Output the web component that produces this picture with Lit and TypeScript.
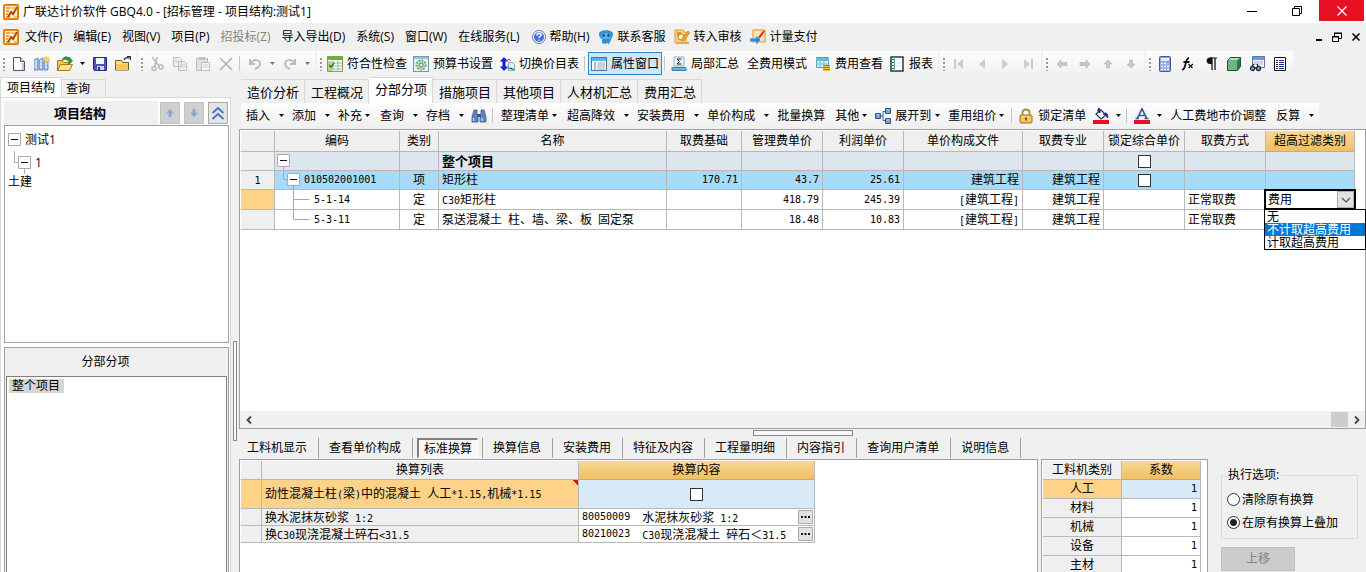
import { LitElement, html, svg, css, nothing, TemplateResult } from "lit";
import { customElement, property, state } from "lit/decorators.js";
import { classMap } from "lit/directives/class-map.js";

const brand = svg`<rect x=".5" y=".5" width="15" height="15" rx="1" fill="#f08a1c" stroke="#d8780c"/><path d="M2 2h12v12H2z" fill="#fff0c4"/><path d="M3 4h4M3 7h3M3 10h2M3 13h4" stroke="#e08a30" stroke-width="1.4"/><path d="M5 13 8 8l2 2 4-7" fill="none" stroke="#b8480a" stroke-width="2"/><path d="M8 4h5M11 13h3" stroke="#e88a20" stroke-width="1.2"/>`;

const glyphs: Record<string, unknown> = {
  brand,
  newdoc: svg`<path d="M2.500 1.500h7l4 4v9h-11z" fill="#fff" stroke="#47566e"/><path d="M9.500 1.500v4h4" fill="#cfe0f4" stroke="#47566e"/><path d="M12 7v7" stroke="#b9cbe4" stroke-width="2"/>`,
  books: svg`<path d="M0 4l4-2v12H0zM5 4l4-2v12H5zM10 4h4v10h-4z" fill="#a9c6ee" stroke="#4c78b8" stroke-width=".8"/><path d="M1 5h2M6 5h2M1 8h2M6 8h2M11 8h2M1 11h2M6 11h2M11 11h2" stroke="#fff"/><path d="m12.500 0 .9 2.200 2.300-.8-1 2.200 1.300 1.300-2.500.3-1 2-1-2-2-.4 1.500-1.400-.7-2 1.900.6z" fill="#fbd45c" stroke="#f0b050" stroke-width=".5"/>`,
  open: svg`<path d="M.5 14.500v-10h5l1.500 2h5v8z" fill="#f4c64e" stroke="#a87c1c"/><path d="m.5 14.500 3-6h12l-3 6z" fill="#ffe28a" stroke="#a87c1c"/><path d="M5 4c2-4 6-4 7-1V1l3.500 4L12 8V5.500C10 3 7 3 5 4z" fill="#3ca02c" stroke="#1f6a17" stroke-width=".7"/>`,
  save: svg`<path d="M1.500 1.500h13v13h-12l-1-1z" fill="#4a55b8" stroke="#252f80"/><path d="M4 2h8v6H4z" fill="#f2f4ff"/><path d="M5 10h7v4H5z" fill="#cfd6ee"/><path d="M6 11h2v3H6z" fill="#252f80"/>`,
  folder: svg`<path d="M.5 14V4.500h6l1 2h6V14z" fill="#ffe08a" stroke="#6f5a22"/><path d="M1 8h12v6H1z" fill="#f6c95a"/><path d="M9 4c1-2 3-3 5-2M12 .5h3.500V4" fill="none" stroke="#333" stroke-width="1.500"/>`,
  cut: svg`<path d="m3 1 7 9M8 1 6 10" stroke="#b9b9b9" stroke-width="1.500"/><circle cx="5" cy="12.500" r="2" fill="none" stroke="#b9b9b9" stroke-width="1.500"/><circle cx="12" cy="11" r="2" fill="none" stroke="#b9b9b9" stroke-width="1.500"/>`,
  copy: svg`<path d="M1.500 1.500h6l2 2v7h-8zM6.500 5.500h6l2 2v7h-8z" fill="#f0f0f0" stroke="#bcbcbc"/><path d="M8 9h5M8 11h5M3 4h3M3 6h3" stroke="#ccc"/>`,
  paste: svg`<path d="M1.500 2.500h11v12h-11z" fill="#e2e2e2" stroke="#bcbcbc"/><path d="M4 1h6v3H4z" fill="#c2c2c2"/><path d="M6.500 6.500h8v8h-8z" fill="#f7f7f7" stroke="#bcbcbc"/><path d="M8 9h5M8 11h5" stroke="#ccc"/>`,
  del: svg`<path d="m2 2 12 12M14 2 2 14" stroke="#b4b4b4" stroke-width="1.700"/>`,
  undo: svg`<path d="M3 3v5h5M4 7c2-4 9-4 9 1 0 3-3 4-5 5" fill="none" stroke="#bdbdbd" stroke-width="2"/>`,
  redo: svg`<path d="M13 3v5H8M12 7C10 3 3 3 3 8c0 3 3 4 5 5" fill="none" stroke="#bdbdbd" stroke-width="2"/>`,
  check: svg`<path d="M.5.500h15v15H.5z" fill="#fff" stroke="#7a9a5a"/><path d="M0 0h16v4H0z" fill="#6fae3c"/><path d="M1 7h14M1 10h14M1 13h14M6 4v12M11 4v12" stroke="#9ab4a0"/><path d="M1 5h5v10H1z" fill="#b4d890"/><path d="m2 9 2 2 3-4" fill="none" stroke="#2d7f1a" stroke-width="1.500"/>`,
  gear: svg`<rect x=".5" y=".5" width="15" height="15" fill="#e8f0f4" stroke="#6f9aa8"/><path d="M1 1h14v2H1z" fill="#9dc0d8"/><circle cx="8" cy="9" r="4.500" fill="none" stroke="#6da868" stroke-width="2" stroke-dasharray="2 1"/><circle cx="8" cy="9" r="2" fill="none" stroke="#6da868" stroke-width="1.500"/>`,
  swap: svg`<path d="M5 1 .8 5.500H3.500v5H.8L5 15l4.200-4.500H6.500v-5h2.700z" fill="#1020d8"/><path d="M9.500 6.500h4l2 2v6h-6z" fill="#dff4fa" stroke="#58b0d8"/><path d="m7 5 3-2 2 2" fill="none" stroke="#d04040"/><path d="M8 12h5l3 2" stroke="#e09030" stroke-dasharray="1.500 1"/>`,
  props: svg`<rect x=".5" y="1.500" width="15" height="13" fill="#fff" stroke="#5a7288"/><path d="M1 2h14v3H1z" fill="#58b4e8"/><path d="M3 7h2M3 9h2M3 11h2M3 13h2" stroke="#3f7cac"/><path d="M6 7h8M6 9h8M6 11h8M6 13h8" stroke="#8fa6b8"/>`,
  sum: svg`<path d="M3 1h10v9H3z" fill="#e4f2fa" stroke="#8bb"/><path d="M10.500 3H6l2.500 2.500L6 8h4.500" fill="none" stroke="#223"/><path d="M1 11.500h14v3H1z" fill="#68b4d4" stroke="#3c84a8"/>`,
  feeview: svg`<path d="M1.500 1.500h12v10h-12z" fill="#d8f0f8" stroke="#4ca0c0"/><path d="M1 2h13v3H1z" fill="#68bcd8"/><path d="M1 8h13M5 2v10M9 2v10" stroke="#68bcd8"/><path d="M8 9h7v6H8z" fill="#f4c040"/><path d="M8 9.500h7M8 11.500h7M8 13.500h7" stroke="#b87818"/>`,
  report: svg`<path d="M2 1h12v14H2z" fill="#fff" stroke="#1d4030" stroke-width="1.500"/><path d="M5.500 1v14" stroke="#68a088"/><path d="M3 3.500h2M3 6.500h2M3 9.500h2M3 12.500h2" stroke="#2d6a50"/><path d="M7 4h6M7 7h6M7 10h6" stroke="#dce8f4"/>`,
  first: svg`<path d="M4 3v10" stroke="#ccc" stroke-width="2"/><path d="M12 3v10L6 8z" fill="#ccc"/>`,
  prev: svg`<path d="M11 3v10L5 8z" fill="#ccc"/>`,
  next: svg`<path d="M5 3v10l6-5z" fill="#ccc"/>`,
  last: svg`<path d="M12 3v10" stroke="#ccc" stroke-width="2"/><path d="M4 3v10l6-5z" fill="#ccc"/>`,
  left: svg`<path d="M7 4v2.500h6v3H7V12L3 8z" fill="#c6c6c6" stroke="#b2b2b2" stroke-width=".6"/>`,
  right: svg`<path d="M9 4v2.500H3v3h6V12l4-4z" fill="#c6c6c6" stroke="#b2b2b2" stroke-width=".6"/>`,
  up: svg`<path d="M4 8h2.500v4h3V8H12L8 4z" fill="#c6c6c6" stroke="#b2b2b2" stroke-width=".6"/>`,
  down: svg`<path d="M4 8h2.500V4h3v4H12l-4 4z" fill="#c6c6c6" stroke="#b2b2b2" stroke-width=".6"/>`,
  calc: svg`<rect x="2.500" y=".5" width="11" height="15" rx="1" fill="#8aa6e0" stroke="#3f5a9c"/><path d="M4 2h8v3H4z" fill="#dfe9fa"/><path d="M4 7.500h8M4 10.500h8M4 13.500h8" stroke="#fff" stroke-width="1.500" stroke-dasharray="2 1"/><path d="M10 7h2" stroke="#d44"/>`,
  fx: svg`<path d="M2 13.500c4 1 3-11.500 7-11.500M3.500 6h6" fill="none" stroke="#111" stroke-width="1.800"/><path d="m8.500 8 4 4M13 8l-4.500 4" stroke="#111" stroke-width="1.200"/>`,
  para: svg`<path d="M9 2v12M12 2v12" stroke="#111" stroke-width="1.300"/><path d="M9 1.500H7C2.500 1.500 2.500 8 7 8h2z" fill="#111"/><path d="M7 2h7" stroke="#111"/>`,
  cube: svg`<path d="m1.500 4.500 3-3h10v9l-3 4h-10z" fill="#2f7a48" stroke="#1d5430"/><path d="M2 5h9v9H2z" fill="#6fb487"/><path d="m2 4.500 2.700-2.500H14l-3 2.500z" fill="#b4dcc0"/>`,
  find2: svg`<path d="M3.500.5h12v11h-12z" fill="#eef4fc" stroke="#5878a8"/><path d="M4 1h11v3H4z" fill="#6f98d8"/><path d="M5 6h9M5 8h9" stroke="#a4bce0"/><circle cx="3.500" cy="12.500" r="2" fill="#9ab4d0" stroke="#222c3c" stroke-width="1.300"/><circle cx="9.500" cy="12.500" r="2" fill="#9ab4d0" stroke="#222c3c" stroke-width="1.300"/><path d="m3 10 2-2M9 10 8 8M5 12h3" stroke="#222c3c" stroke-width="1.300"/>`,
  list: svg`<path d="M2.500 1.500h11v13h-11z" fill="#fff" stroke="#111"/><path d="M4 4.500h2M4 6.500h2M4 8.500h2M4 10.500h2M4 12.500h2M7 4.500h5M7 6.500h5M7 8.500h5M7 10.500h5M7 12.500h5" stroke="#1c2a80"/>`,
  help: svg`<circle cx="8" cy="8" r="6.500" fill="#fff" stroke="#5877b8"/><circle cx="8" cy="8" r="5" fill="#3f6fd0"/><path d="M6 6.500c0-3 4-3 4-.5 0 1.500-2 1.500-2 3M8 10.500v1.200" fill="none" stroke="#fff" stroke-width="1.500"/>`,
  service: svg`<path d="M1 5c0-5 14-5 14 0 0 3-2 4-2 6l-2 4-2-1-2 1-3-1v-4C2 9 1 8 1 5z" fill="#2f92d4"/><path d="M3 6c2-2 8-2 10 0 0 4-2 4-5 4S3 10 3 6z" fill="#58b0e8"/><circle cx="5.500" cy="6.500" r="1.200" fill="#123c64"/><circle cx="10.500" cy="6.500" r="1.200" fill="#123c64"/>`,
  audit: svg`<path d="M1 1h8l3 3v10H1z" fill="#fbd074" stroke="#e0a040"/><path d="M3 4h4M3 6h3" stroke="#c05a18"/><circle cx="7" cy="8" r="3" fill="#fff4d0" stroke="#b0862c"/><path d="m7 11 7-9 1.500 2-6 8z" fill="#f4a030" stroke="#d08a20"/><path d="M2 14h13" stroke="#e8a848" stroke-width="2"/>`,
  pay: svg`<path d="M3 1h12v12H3z" fill="#ffe4b0" stroke="#e88a2c"/><path d="m6 8 2 2 6-8" fill="none" stroke="#d03018" stroke-width="2"/><path d="M0 9h6V6l5 5-5 5v-3H0z" fill="#2f8ad8" stroke="#fff" stroke-width=".5"/>`,
  binoc: svg`<path d="M3 2h3v4l1 2v6H1V9zM10 2h3l2 7v5H9V8l1-2z" fill="#5f86bc" stroke="#35588e" stroke-width=".8"/><path d="M6 6h4v3H6z" fill="#35588e"/><path d="M2.500 10v3M11 10v3" stroke="#cfe0f6" stroke-width="1.200"/>`,
  expand: svg`<path d="M5 8h3M8 8V3.500h2M8 8v4.500h2" fill="none" stroke="#3d5f94"/><path d="M.5 5.500h5v5h-5zM10.500.5h5v5h-5zM10.500 10.500h5v5h-5z" fill="#6f9cdc" stroke="#35588e"/><path d="M2 7h2M12 2h2M12 12h2" stroke="#dceafc"/>`,
  lock: svg`<path d="M4.500 8V4.500c0-4 7-4 7 0V8" fill="none" stroke="#a88a40" stroke-width="1.800"/><rect x="2" y="7" width="12" height="8" rx="1" fill="#f0bc48" stroke="#a87818"/><path d="M3 9h10M3 12h10" stroke="#fbe09a"/><path d="M8 9.500v3" stroke="#5a4010" stroke-width="1.600"/>`,
  bucket: svg`<path d="m3 6 5-4 5 5-5 4z" fill="#fff" stroke="#222c60" stroke-width="1.200"/><path d="M7 5V1.500C7 0 5 0 5 1.500V4M12 5c3 0 3 3 2.500 5C13 8 13 7 10 6" fill="#2a3c90" stroke="#222c60"/><path d="M0 12h16v4H0z" fill="#e81123"/>`,
  fontc: svg`<path d="M3 11 8 .8 13 11M5 7.500h6M1.500 10.500H5M10.500 10.500h4" fill="none" stroke="#3a5a9c" stroke-width="1.700"/><path d="M0 12h16v4H0z" fill="#e81123"/>`,
  bup: svg`<path d="M4 8h2.500v4h3V8H12L8 4z" fill="#88a4cc" stroke="#a8bcd8"/>`,
  bdown: svg`<path d="M4 8h2.500V4h3v4H12l-4 4z" fill="#88a4cc" stroke="#a8bcd8"/>`,
  collapse: svg`<path d="m2.500 8 5.500-5 5.500 5M2.500 14 8 9l5.500 5" fill="none" stroke="#3f74c0" stroke-width="1.700"/>`,
  min: svg`<path d="M3 8.500h10" stroke="#000"/>`,
  restore: svg`<path d="M3.500 5.500h7v7h-7zM5.500 5V3.500h7v7H11" fill="none" stroke="#000"/>`,
  close: svg`<path d="m3.500 3.500 9 9M12.500 3.500l-9 9" stroke="#fff" stroke-width="1.200"/>`,
  mmin: svg`<path d="M6 11h6" stroke="#000" stroke-width="2"/>`,
  mrestore: svg`<path d="M3.500 7.500h6v5h-6zM5.500 7V4.500h7v5H10M3 8h7M5 4h8" fill="none" stroke="#000"/>`,
  mclose: svg`<path d="m4.500 4.500 7 7M11.500 4.500l-7 7" stroke="#000" stroke-width="1.500"/>`,
  sleft: svg`<path d="M10 4.500 6.500 8l3.500 3.500" fill="none" stroke="#444" stroke-width="1.800"/>`,
  sright: svg`<path d="M6 4.500 9.500 8 6 11.500" fill="none" stroke="#444" stroke-width="1.800"/>`,
  chevron: svg`<path d="M4 6l4 4 4-4" fill="none" stroke="#555" stroke-width="1.200"/>`,
};

const icon = (name: string) =>
  html`<svg class="ico" width="16" height="16" viewBox="0 0 16 16" aria-hidden="true">${glyphs[name]}</svg>`;

const arrow = (dim = false) =>
  html`<svg class="arrow" width="5" height="3" viewBox="0 0 5 3" aria-hidden="true"><path d="M0 0h5L2.500 3z" fill=${dim ? "#777" : "#111"} /></svg>`;

const sheet = css`
  * { box-sizing: border-box; }
  button, input, select { font: inherit; color: inherit; margin: 0; }
  button {
    display: inline-flex; align-items: center; justify-content: center;
    padding: 0; border: 0; background: none; white-space: nowrap;
  }
  svg { display: block; flex: none; }
  .num { font-family: "DejaVu Sans Mono", monospace; font-size: 10px; line-height: 12px; white-space: pre; }
  table { border-collapse: separate; border-spacing: 0; table-layout: fixed; }
  th, td {
    padding: 0 3px; font-weight: normal; text-align: left; white-space: nowrap; overflow: hidden;
    border-right: 1px solid #b8b8b8; border-bottom: 1px solid #b8b8b8; line-height: 16px;
  }
  th { background: #efefef; text-align: center; }
  .hot { background: linear-gradient(#f9d795, #efc063); border-bottom-color: #d5a95c; }
  .c { text-align: center; }
  .r { text-align: right; }
  .tick {
    appearance: none; display: block; width: 13px; height: 13px; margin: 0 auto;
    background: #fff; border: 1px solid #333;
  }
`;

type Kind = "plain" | "drop" | "split";
interface Tool { label?: string; icon?: string; kind?: Kind; off?: boolean; on?: boolean; sep?: boolean; tip?: string }

const sep: Tool = { sep: true };
const ib = (i: string, tip: string, o: Partial<Tool> = {}): Tool => ({ icon: i, tip, ...o });
const tb = (label: string, i?: string, kind: Kind = "plain"): Tool => ({ label, icon: i, kind });

@customElement("tool-strip")
class ToolStrip extends LitElement {
  @property({ attribute: false }) items: Tool[] = [];
  @property({ type: Boolean }) grip = false;

  static styles = [sheet, css`
    :host { display: flex; align-items: center; height: 25px; padding-right: 2px; background: linear-gradient(#fdfdfd, #f0f0f0); }
    .grip { width: 7px; height: 14px; background: radial-gradient(circle, #999 1px, transparent 1px) 2px 0 / 4px 4px repeat-y; }
    .tool { height: 23px; padding: 0 3px; gap: 4px; }
    .text { padding: 0 5px; gap: 3px; }
    .square { width: 23px; padding: 0; }
    .more { width: 12px; height: 23px; }
    .line { width: 1px; height: 15px; margin: 0 3px 0 2px; background: #c8c8c8; }
    .on { border: 1px solid #2f86cf; background: #cfe6f8; padding: 0 2px; }
  `];

  render() {
    return html`${this.grip ? html`<span class="grip"></span>` : nothing}
      ${this.items.map((t) => t.sep
        ? html`<span class="line"></span>`
        : html`<button
              class=${classMap({ tool: true, square: !t.label, text: !!t.label && !t.icon, on: !!t.on })}
              ?disabled=${t.off} aria-label=${t.label ?? t.tip ?? ""}>
              ${t.icon ? icon(t.icon) : nothing}${t.label ? html`<span>${t.label}</span>` : nothing}
              ${t.kind === "drop" ? arrow() : nothing}
            </button>${t.kind === "split"
              ? html`<button class="more" aria-label="更多" ?disabled=${t.off}>${arrow(t.off)}</button>` : nothing}`)}`;
  }
}

const stripFile = [ib("newdoc", "新建"), ib("books", "新建项目"), ib("open", "打开", { kind: "split" }), ib("save", "保存"), ib("folder", "另存")];
const off = { off: true };
const stripEdit = [ib("cut", "剪切", off), ib("copy", "复制", off), ib("paste", "粘贴", off), ib("del", "删除", off), sep,
  ib("undo", "撤销", { kind: "split", off: true }), ib("redo", "恢复", { kind: "split", off: true })];
const stripMain = [tb("符合性检查", "check"), tb("预算书设置", "gear"), tb("切换价目表", "swap"), sep,
  { ...tb("属性窗口", "props"), on: true }, sep, tb("局部汇总", "sum"), tb("全费用模式"), tb("费用查看", "feeview"), tb("报表", "report")];
const stripNav = [ib("first", "首条", off), ib("prev", "上一条", off), ib("next", "下一条", off), ib("last", "末条", off)];
const stripMove = [ib("left", "左移", off), ib("right", "右移", off), ib("up", "上移", off), ib("down", "下移", off)];
const stripMisc = [ib("calc", "计算器"), ib("fx", "函数"), ib("para", "段落"), ib("cube", "图元"), ib("find2", "查找"), ib("list", "清单")];

const stripSheet: Tool[] = [
  tb("插入", undefined, "split"), tb("添加", undefined, "split"), tb("补充", undefined, "drop"), tb("查询", undefined, "split"),
  tb("存档", undefined, "split"), ib("binoc", "查找"), sep, tb("整理清单", undefined, "drop"), tb("超高降效", undefined, "split"),
  tb("安装费用", undefined, "split"), tb("单价构成", undefined, "split"), tb("批量换算"), tb("其他", undefined, "drop"),
  tb("展开到", "expand", "drop"), tb("重用组价", undefined, "drop"), sep, tb("锁定清单", "lock"),
  ib("bucket", "填充色", { kind: "split" }), sep, ib("fontc", "字体色", { kind: "split" }), tb("人工费地市价调整"), tb("反算", undefined, "split"),
];

const cjkNum = (text: string): (TemplateResult | string)[] =>
  text.split(/([\x20-\x7e]+)/).filter(Boolean).map((p) => /^[\x20-\x7e]+$/.test(p) ? html`<span class="num">${p}</span>` : p);

interface Row { no: string; code: string; level: number; kind: string; name: string; base: string; mgmt: string; profit: string; file: string; major: string; lock?: boolean; mode: string; tone: string; edit?: boolean }

const rows: Row[] = [
  { no: "", code: "", level: 0, kind: "", name: "整个项目", base: "", mgmt: "", profit: "", file: "", major: "", lock: true, mode: "", tone: "total" },
  { no: "1", code: "010502001001", level: 1, kind: "项", name: "矩形柱", base: "170.71", mgmt: "43.7", profit: "25.61", file: "建筑工程", major: "建筑工程", lock: true, mode: "", tone: "item" },
  { no: "", code: "5-1-14", level: 2, kind: "定", name: "C30矩形柱", base: "", mgmt: "418.79", profit: "245.39", file: "[建筑工程]", major: "建筑工程", mode: "正常取费", tone: "sub", edit: true },
  { no: "", code: "5-3-11", level: 3, kind: "定", name: "泵送混凝土 柱、墙、梁、板 固定泵", base: "", mgmt: "18.48", profit: "10.83", file: "[建筑工程]", major: "建筑工程", mode: "正常取费", tone: "sub" },
];

const branches = [
  svg`<path d="M8.500 14v6" stroke="#aaa"/><path d="M2.500 3.500h12v12h-12z" fill="#fff" stroke="#aaa"/><path d="M5 9.500h7" stroke="#111"/>`,
  svg`<path d="M8.500 0v9.500h4M18.500 14v6" fill="none" stroke="#aaa"/><path d="M12.500 3.500h12v12h-12z" fill="#fff" stroke="#aaa"/><path d="M15 9.500h7" stroke="#111"/>`,
  svg`<path d="M18.500 0v20M18.500 9.500h16" fill="none" stroke="#aaa"/>`,
  svg`<path d="M18.500 0v9.500h16" fill="none" stroke="#aaa"/>`,
];
const branchWidth = [18, 29, 39, 39];

@customElement("quantity-grid")
class QuantityGrid extends LitElement {
  static styles = [sheet, css`
    :host { display: flex; flex-direction: column; min-height: 0; border: 1px solid #a0a0a0; background: #fff; }
    .view { flex: 1; min-height: 0; padding: 1px; }
    table { width: 1114px; }
    thead th { height: 21px; }
    tbody tr { height: 19px; }
    tbody .sub { height: 20px; }
    td, tbody th { padding-top: 0; padding-bottom: 0; }
    .total td { background: #dde6ee; }
    .item td { background: #a8dbfa; }
    .here { background: #ffd28a; }
    .name { font-weight: bold; font-size: 13px; }
    .code { padding: 0; }
    .tree { display: flex; align-items: center; height: 18px; }
    .editing { overflow: visible; padding: 0; }
    .editor { position: relative; display: flex; height: 21px; margin: -2px; border: 2px solid #000; background: #fff; }
    .field { flex: 1; min-width: 0; border: 0; padding: 0 2px; outline: 0; background: #fff; line-height: 17px; }
    .pick { width: 17px; background: #e1e1e1; border: 1px solid #adadad; }
    .menu { position: absolute; left: -2px; top: 18px; z-index: 2; width: 102px; margin: 0; padding: 0; list-style: none; border: 1px solid #000; background: #fff; }
    .menu li { height: 13px; line-height: 13px; padding-left: 2px; }
    .menu .picked { background: #0078d7; color: #fff; }
    .scroll { display: flex; align-items: center; height: 17px; background: #f0f0f0; }
    .track { flex: 1; display: flex; justify-content: flex-end; }
    .thumb { width: 17px; height: 15px; background: #cdcdcd; }
    .step { width: 17px; height: 17px; }
  `];

  render() {
    const widths = [34, 125, 39, 228, 75, 81, 81, 119, 81, 81, 81, 89];
    const heads = ["", "编码", "类别", "名称", "取费基础", "管理费单价", "利润单价", "单价构成文件", "取费专业", "锁定综合单价", "取费方式", "超高过滤类别"];
    return html`
      <div class="view">
        <table>
          <colgroup>${widths.map((w) => html`<col width=${w} />`)}</colgroup>
          <thead><tr>${heads.map((h, i) => html`<th class=${i === 11 ? "hot" : ""}>${h}</th>`)}</tr></thead>
          <tbody>${rows.map((r) => html`
            <tr class=${r.tone}>
              <th class=${r.edit ? "here" : ""}><span class="num">${r.no}</span></th>
              <td class="code"><div class="tree">
                <svg width=${branchWidth[r.level]} height="20" viewBox="0 0 ${branchWidth[r.level]} 20">${branches[r.level]}</svg>
                <span class="num">${r.code}</span></div></td>
              <td class="c">${r.kind}</td>
              <td class=${r.level === 0 ? "name" : ""}>${cjkNum(r.name)}</td>
              <td class="r num">${r.base}</td>
              <td class="r num">${r.mgmt}</td>
              <td class="r num">${r.profit}</td>
              <td class="r">${cjkNum(r.file)}</td>
              <td class="r">${r.major}</td>
              <td>${r.lock ? html`<input class="tick" type="checkbox" aria-label="锁定综合单价" />` : nothing}</td>
              <td>${r.mode}</td>
              ${r.edit ? html`<td class="editing"><div class="editor">
                  <input class="field" type="text" value="费用" aria-label="超高过滤类别" />
                  <button class="pick" aria-label="展开">${icon("chevron")}</button>
                  <ul class="menu" role="listbox" aria-label="超高过滤类别">
                    <li role="option">无</li><li role="option" class="picked" aria-selected="true">不计取超高费用</li><li role="option">计取超高费用</li>
                  </ul></div></td>` : html`<td></td>`}
            </tr>`)}</tbody>
        </table>
      </div>
      <div class="scroll">
        <button class="step" aria-label="向左">${icon("sleft")}</button>
        <div class="track"><div class="thumb"></div></div>
        <button class="step" aria-label="向右">${icon("sright")}</button>
      </div>`;
  }
}

@customElement("conversion-panel")
class ConversionPanel extends LitElement {
  @state() private mode = "stack";

  static styles = [sheet, css`
    :host { display: flex; gap: 3px; min-height: 0; }
    .box { border: 1px solid #a0a0a0; border-bottom: 0; background: #fff; padding: 1px; overflow: hidden; }
    .list { flex: 1; }
    .rates { width: 167px; }
    .list table { width: 574px; }
    .rates table { width: 158px; }
    tr { height: 19px; }
    .list .tall { height: 29px; }
    .list .low { height: 17px; }
    .low td, .low th { line-height: 15px; }
    td.warm, th.warm { background: #ffd28a; }
    .cool { background: #d8eaf8; }
    .grey { background: #efefef; }
    .flag { background: linear-gradient(225deg, #e01010 4px, transparent 4px) #ffd28a; }
    .pair { display: flex; align-items: center; gap: 12px; height: 16px; margin-right: -2px; }
    .pair .what { flex: 1; }
    .dots { width: 15px; height: 14px; background: #e1e1e1; border: 1px solid #adadad; }
    .side { width: 155px; padding: 8px 8px 0 10px; overflow: hidden; }
    fieldset { display: flex; flex-direction: column; gap: 6px; height: 72px; margin: 0; padding: 8px 5px 0; border: 1px solid #dcdcdc; min-width: 0; }
    legend { padding: 0 2px; line-height: 16px; margin-left: -1px; }
    label { display: flex; align-items: center; gap: 2px; line-height: 17px; white-space: nowrap; }
    .radio { appearance: none; width: 13px; height: 13px; border: 1px solid #333; border-radius: 50%; background: #fff; }
    .radio:checked { background: radial-gradient(circle, #222 3px, #fff 4px); }
    .move { width: 74px; height: 24px; margin-top: 8px; background: #ccc; border: 1px solid #bfbfbf; color: #838383; }
  `];

  render() {
    const code = (n: string, what: string) => html`<div class="pair"><span class="num">${n}</span><span class="what">${cjkNum(what)}</span><button class="dots" aria-label="选择"><svg width="9" height="2" viewBox="0 0 9 2"><path d="M0 0h2v2H0zM3.500 0h2v2h-2zM7 0h2v2H7z" fill="#111"/></svg></button></div>`;
    return html`
      <div class="box list"><table>
        <colgroup><col width="21" /><col width="317" /><col width="236" /></colgroup>
        <thead><tr><th></th><th>换算列表</th><th class="hot">换算内容</th></tr></thead>
        <tbody>
          <tr class="tall"><th class="warm"></th><td class="flag">${cjkNum("劲性混凝土柱(梁)中的混凝土 人工*1.15,机械*1.15")}</td><td class="cool"><input type="checkbox" class="tick" aria-label="换算内容" /></td></tr>
          <tr class="low"><th></th><td class="grey">${cjkNum("换水泥抹灰砂浆 1:2")}</td><td>${code("80050009", "水泥抹灰砂浆 1:2")}</td></tr>
          <tr class="low"><th></th><td class="grey">${cjkNum("换C30现浇混凝土碎石<31.5")}</td><td>${code("80210023", "C30现浇混凝土 碎石＜31.5")}</td></tr>
        </tbody></table></div>
      <div class="box rates"><table>
        <colgroup><col width="79" /><col width="79" /></colgroup>
        <thead><tr><th>工料机类别</th><th class="hot">系数</th></tr></thead>
        <tbody>${["人工", "材料", "机械", "设备", "主材"].map((n, i) => html`
          <tr><th class=${i ? "" : "warm"}>${n}</th><td class=${i ? "r num" : "r num cool"}>1</td></tr>`)}</tbody>
      </table></div>
      <div class="side">
        <fieldset><legend>执行选项:</legend>
          <label><input class="radio" type="radio" name="mode" .checked=${this.mode === "clear"} @change=${() => (this.mode = "clear")} />清除原有换算</label>
          <label><input class="radio" type="radio" name="mode" .checked=${this.mode === "stack"} @change=${() => (this.mode = "stack")} />在原有换算上叠加</label>
        </fieldset>
        <button class="move" disabled>上移</button>
      </div>`;
  }
}

@customElement("app-root")
class AppRoot extends LitElement {
  static styles = [sheet, css`
    :host {
      display: flex; flex-direction: column; height: 100vh; overflow: hidden; background: #f0f0f0; color: #000;
      font: 12px/16px "Open Sans", "Noto Sans CJK SC", sans-serif;
    }
    .title { display: flex; align-items: center; height: 23px; padding: 0 2px 0 3px; gap: 4px; background: #fff; }
    .title h1 { flex: 1; margin: 0; font: inherit; }
    .win { align-self: flex-start; width: 45px; height: 21px; }
    .title .win + .win { margin-left: -4px; }
    .shut { background: #e81123; }
    .menubar { display: flex; align-items: center; height: 28px; padding: 0 2px 0 3px; gap: 11px; }
    .menubar .lead { margin-right: -5px; }
    .menubar .dim { color: #838383; }
    .extras { display: flex; gap: 9px; }
    .extras button { gap: 3px; }
    .mdi { display: flex; gap: 3px; margin-left: auto; }
    .bars { display: flex; gap: 2px; padding-bottom: 1px; overflow: hidden; }
    .work { flex: 1; display: flex; min-height: 0; }
    .left { width: 231px; display: flex; flex-direction: column; min-height: 0; }
    .tabs { display: flex; align-items: flex-end; }
    .tab { border: 1px solid #d9d9d9; border-bottom: 0; border-left: 0; }
    .left .tabs { height: 20px; }
    .left .tab { height: 18px; padding: 0 15px 0 4px; }
    .left .cur { height: 21px; padding: 0 6px; background: #fff; border-left: 1px solid #d9d9d9; margin-bottom: -1px; }
    .pane { flex: 1; display: flex; flex-direction: column; min-height: 0; padding: 3px 1px 0 3px; background: #fff; border: 1px solid #d9d9d9; border-bottom: 0; }
    .head { display: flex; align-items: center; gap: 4px; height: 24px; padding-right: 1px; background: linear-gradient(90deg, #f0f0f0 154px, #fff 154px); }
    .head h2 { flex: 1; margin: 0; font-size: 13px; line-height: 20px; text-align: center; }
    .sq { width: 20px; height: 22px; background: #cfcfcf; border: 1px solid #c2c2c2; }
    .lit { background: #e4e4e4; border-color: #a8a8a8; }
    .box { border: 1px solid #a0a0a0; background: #fff; min-height: 0; }
    .tree { flex: 215; padding: 2px 0 0 3px; }
    .node { display: flex; align-items: center; gap: 4px; height: 23px; }
    .leaf { line-height: 16px; }
    .parts { flex: 226; display: flex; flex-direction: column; margin-top: 4px; padding: 0 1px; border-bottom: 0; background: #f0f0f0; }
    .parts h2 { margin: 0; height: 28px; padding-right: 22px; font: inherit; line-height: 28px; text-align: center; }
    .inner { flex: 1; padding: 1px 2px; border-bottom: 0; border-color: #808080; }
    .mark { display: inline-block; padding: 0 4px 0 3px; line-height: 14px; background: #d6d6d6; }
    .split { width: 8px; display: flex; align-items: center; justify-content: center; padding-top: 133px; }
    .bar { width: 4px; height: 100px; border: 1px solid #808890; background: #f7f7f7; }
    .main { flex: 1; min-width: 0; display: flex; flex-direction: column; }
    .main .tabs { height: 26px; padding-left: 2px; font-size: 13px; }
    .main .tab { height: 24px; padding: 0 5px 0 6px; }
    .main .cur { height: 26px; padding-bottom: 4px; background: #fff; }
    .sheetbar { display: flex; padding: 0 0 1px 2px; }
    quantity-grid { flex: 1; }
    .hbar { display: flex; justify-content: center; height: 8px; padding-top: 1px; }
    .hbar i { width: 100px; height: 6px; border: 1px solid #808890; background: #f7f7f7; }
    .panels { display: flex; align-items: center; height: 22px; }
    .panels button { height: 20px; padding: 0 11px 0 10px; border-right: 1px solid #a0a0a0; }
    .panels .first { padding-left: 8px; }
    .panels .sunk { height: 20px; padding: 0 5px; margin: 0 4px; border: 1px solid #fff; border-top: 2px solid #808080; border-left: 2px solid #808080; background: #f7f7f7; }
    .panels .after { border-left: 1px solid #a0a0a0; }
    conversion-panel { height: 113px; }
  `];

  render() {
    const menus = ["文件(F)", "编辑(E)", "视图(V)", "项目(P)", "招投标(Z)", "导入导出(D)", "系统(S)", "窗口(W)", "在线服务(L)"];
    const extra = [["help", "帮助(H)"], ["service", "联系客服"], ["audit", "转入审核"], ["pay", "计量支付"]];
    const tabs = ["造价分析", "工程概况", "分部分项", "措施项目", "其他项目", "人材机汇总", "费用汇总"];
    const panels = ["工料机显示", "查看单价构成", "标准换算", "换算信息", "安装费用", "特征及内容", "工程量明细", "内容指引", "查询用户清单", "说明信息"];
    const minus = html`<svg width="13" height="13" viewBox="0 0 13 13"><path d="M.5.5h12v12H.5z" fill="#fff" stroke="#aaa"/><path d="M3 6.500h7" stroke="#111"/></svg>`;
    return html`
      <header class="title">${icon("brand")}<h1>广联达计价软件 GBQ4.0 - [招标管理 - 项目结构:测试1]</h1>
        <button class="win" aria-label="最小化">${icon("min")}</button>
        <button class="win" aria-label="还原">${icon("restore")}</button>
        <button class="win shut" aria-label="关闭">${icon("close")}</button>
      </header>
      <nav class="menubar"><span class="lead">${icon("brand")}</span>
        ${menus.map((m) => html`<button class=${m.startsWith("招") ? "dim" : ""}>${m}</button>`)}
        <span class="extras">${extra.map(([i, t]) => html`<button>${icon(i)}${t}</button>`)}</span>
        <span class="mdi"><button aria-label="最小化">${icon("mmin")}</button><button aria-label="还原">${icon("mrestore")}</button><button aria-label="关闭">${icon("mclose")}</button></span>
      </nav>
      <div class="bars">
        ${[stripFile, stripEdit, stripMain, stripNav, stripMove, stripMisc].map((s) => html`<tool-strip grip .items=${s}></tool-strip>`)}
      </div>
      <div class="work">
        <aside class="left">
          <div class="tabs"><button class="tab cur">项目结构</button><button class="tab">查询</button></div>
          <div class="pane">
            <div class="head"><h2>项目结构</h2>
              <button class="sq" disabled aria-label="上移">${icon("bup")}</button><button class="sq" disabled aria-label="下移">${icon("bdown")}</button><button class="sq lit" aria-label="收起">${icon("collapse")}</button></div>
            <div class="box tree">
              <div class="node">${minus}<span>测试1</span></div>
              <div class="node"><svg width="23" height="23" viewBox="0 0 23 23"><path d="M6.500 0v11.500h4M16.500 18v5" fill="none" stroke="#aaa"/><path d="M10.500 5.500h12v12h-12z" fill="#fff" stroke="#aaa"/><path d="M13 11.500h7" stroke="#111"/></svg><span>1</span></div>
              <div class="leaf">土建</div>
            </div>
            <div class="box parts"><h2>分部分项</h2><div class="box inner"><span class="mark">整个项目</span></div></div>
          </div>
        </aside>
        <div class="split"><div class="bar"></div></div>
        <main class="main">
          <div class="tabs">${tabs.map((t, i) => html`<button class=${classMap({ tab: true, cur: i === 2 })}>${t}</button>`)}</div>
          <div class="sheetbar"><tool-strip .items=${stripSheet}></tool-strip></div>
          <quantity-grid></quantity-grid>
          <div class="hbar"><i></i></div>
          <div class="panels">${panels.map((t, i) => html`<button class=${classMap({ first: i === 0, sunk: i === 2, after: i === 3 })}>${t}</button>`)}</div>
          <conversion-panel></conversion-panel>
        </main>
      </div>`;
  }
}
